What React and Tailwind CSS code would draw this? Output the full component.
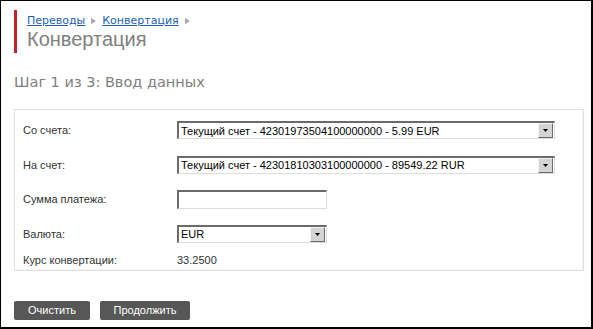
import React, { useState } from 'react';

const FONT = "font-['Liberation_Sans',Arial,sans-serif]";

// Windows-classic style select box with the grey arrow button
const FakeSelect = ({ value, width }) => (
  <div
    className={`flex items-center h-[18px] ${width} bg-white border-t-2 border-l-2 border-t-[#6b6b6b] border-l-[#6b6b6b] border-b border-r border-b-[#dcdcdc] border-r-[#dcdcdc]`}
  >
    <span className="flex-1 pl-[2px] text-[11px] leading-[14px] text-black whitespace-nowrap overflow-hidden">
      {value}
    </span>
    <span className="flex items-center justify-center w-[15px] h-[15px] mr-[1px] bg-[#d4d4d4] border border-t-[#f4f4f4] border-l-[#f4f4f4] border-b-[#6b6b6b] border-r-[#6b6b6b]">
      <svg width="5" height="3" viewBox="0 0 5 3">
        <path d="M0 0h5L2.5 3z" fill="#000" />
      </svg>
    </span>
  </div>
);

const Row = ({ label, children, h = 'h-[34.5px]' }) => (
  <div className={`flex items-center ${h}`}>
    <div className="w-[154px] text-[11px] text-[#333]">{label}</div>
    {children}
  </div>
);

const Arrow = () => (
  <svg width="5" height="6" viewBox="0 0 5 6" className="mx-[6px]">
    <path d="M0 0l5 3-5 3z" fill="#a8a8a8" />
  </svg>
);

export default function App() {
  const [amount, setAmount] = useState('');

  return (
    <div
      className={`w-[593px] h-[329px] bg-white border-t border-l border-b-2 border-r-2 border-black ${FONT} overflow-hidden`}
    >
      {/* Header */}
      <div className="mt-[9px] ml-[13px] pl-[10px] border-l-[3px] border-[#c1232b] h-[43px]">
        <div className="flex items-center text-[11px] leading-[13px] pt-[4px] font-['DejaVu_Sans',sans-serif]">
          <a href="#" className="text-[#1a5fb4] underline">Переводы</a>
          <Arrow />
          <a href="#" className="text-[#1a5fb4] underline">Конвертация</a>
          <Arrow />
        </div>
        <h1 className="text-[20px] leading-[24px] text-[#808080] mt-[0px]">Конвертация</h1>
      </div>

      <h2 className="ml-[13px] mt-[20px] text-[14.5px] leading-[18px] text-[#808080] font-['DejaVu_Sans',sans-serif]">
        Шаг 1 из 3: Ввод данных
      </h2>

      {/* Form panel */}
      <div className="ml-[13px] mt-[18px] w-[570px] h-[162px] border border-[#e2e2e2] shadow-[inset_-1px_-1px_0_#f2f2f2] pl-[8px] pt-[3px]">
        <Row label="Со счета:">
          <FakeSelect width="w-[378px]" value="Текущий счет - 42301973504100000000 - 5.99 EUR" />
        </Row>
        <Row label="На счет:">
          <FakeSelect width="w-[378px]" value="Текущий счет - 42301810303100000000 - 89549.22 RUR" />
        </Row>
        <Row label="Сумма платежа:">
          <input
            value={amount}
            onChange={(e) => setAmount(e.target.value)}
            className="h-[19px] w-[150px] bg-white border-t-2 border-l-2 border-t-[#6b6b6b] border-l-[#6b6b6b] border-b border-r border-b-[#dcdcdc] border-r-[#dcdcdc] outline-none text-[11px] px-[2px]"
          />
        </Row>
        <Row label="Валюта:">
          <FakeSelect width="w-[150px]" value="EUR" />
        </Row>
        <Row label="Курс конвертации:" h="h-[18px]">
          <span className="text-[11px] text-[#333]">33.2500</span>
        </Row>
      </div>

      {/* Buttons */}
      <div className="flex gap-[10px] ml-[13px] mt-[30px]">
        <button className="h-[19px] w-[76px] rounded-[2px] bg-[#575757] text-white text-[11px] leading-[19px]">
          Очистить
        </button>
        <button className="h-[19px] w-[90px] rounded-[2px] bg-[#575757] text-white text-[11px] leading-[19px]">
          Продолжить
        </button>
      </div>
    </div>
  );
}
